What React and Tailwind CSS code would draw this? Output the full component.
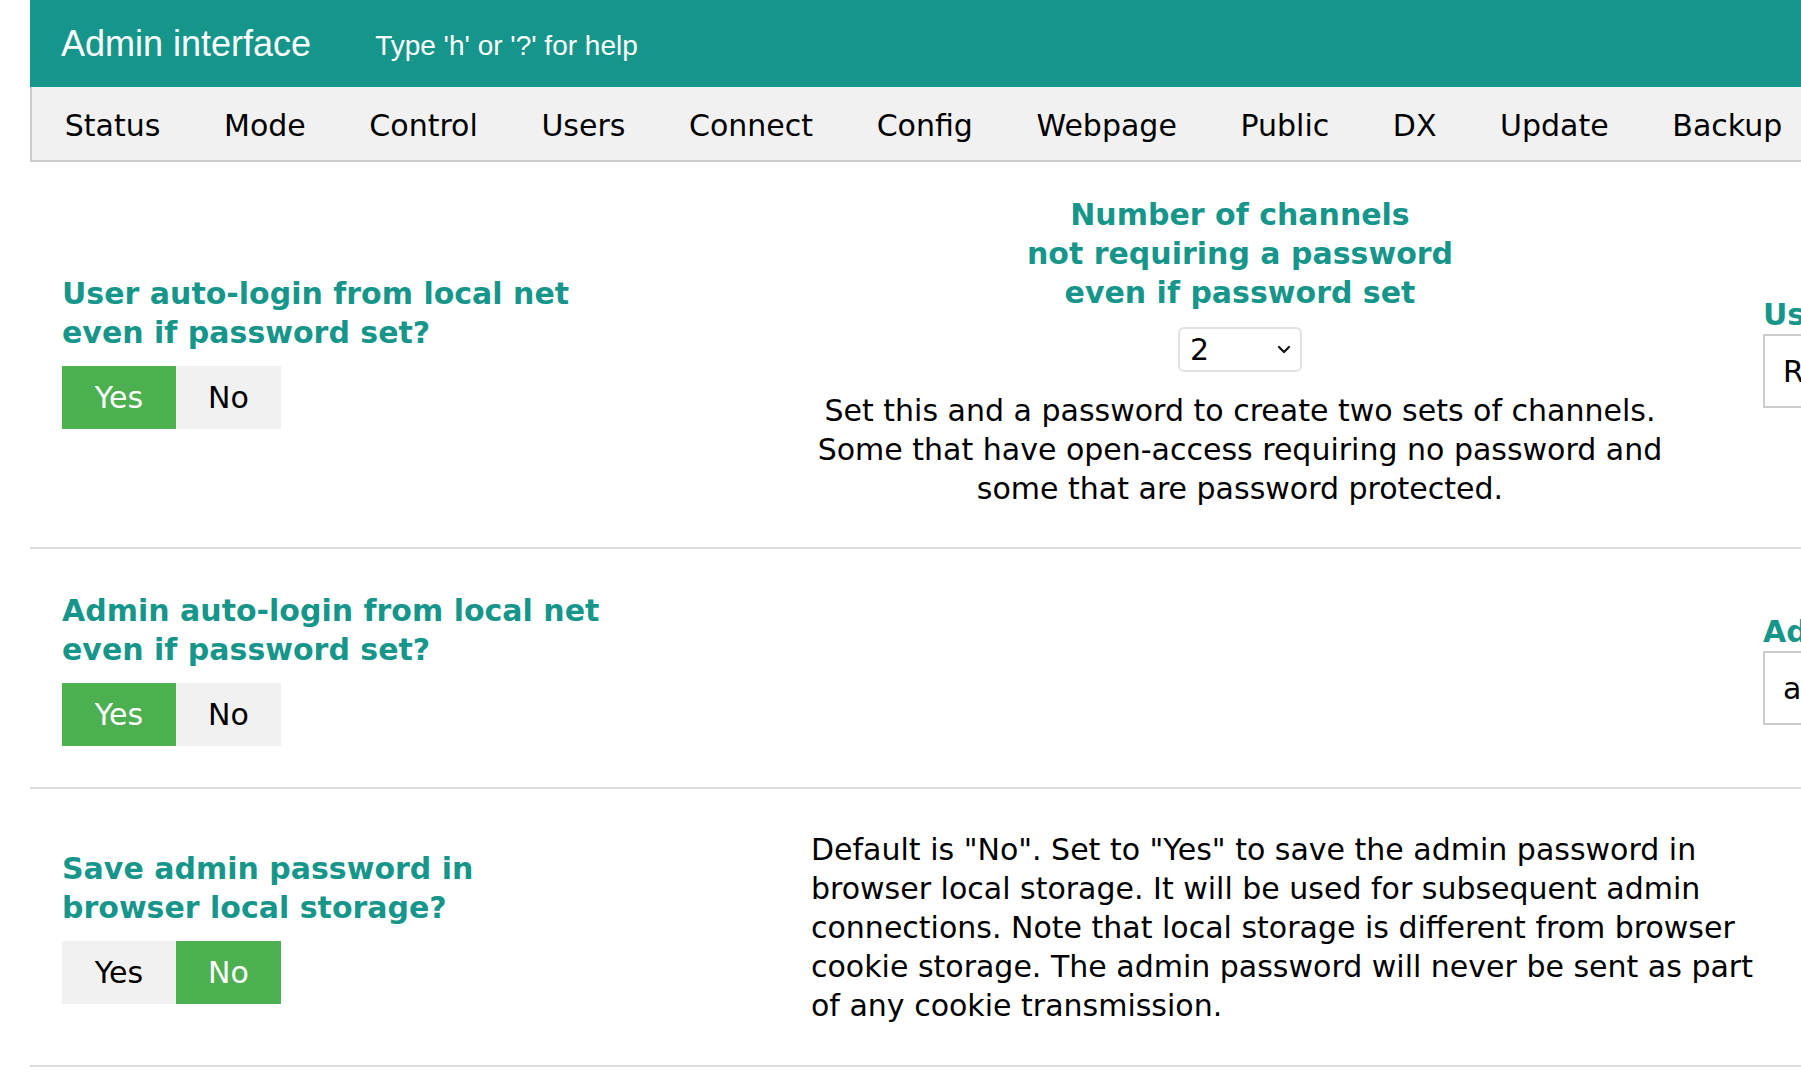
import React from 'react';

const teal = 'text-[#16968a]';

function Toggle({ value }) {
    const on = 'bg-[#4caf50] text-white';
    const off = 'bg-[#f1f1f1] text-black';
    return (
        <div className="flex mt-[14px]">
            <div className={`h-[63px] w-[114px] flex items-center justify-center ${value ? on : off}`}>Yes</div>
            <div className={`h-[63px] w-[105px] flex items-center justify-center ${value ? off : on}`}>No</div>
        </div>
    );
}

function Heading({ children, className = '' }) {
    return <div className={`font-bold leading-[39px] ${teal} ${className}`}>{children}</div>;
}

function FieldBox({ label, value }) {
    return (
        <div className="ml-[94px] shrink-0">
            <Heading className="whitespace-nowrap">{label}</Heading>
            <div className="w-[420px] h-[74px] border-2 border-[#ccc] flex items-center px-[18px]">{value}</div>
        </div>
    );
}

export default function App() {
    const tabs = ['Status', 'Mode', 'Control', 'Users', 'Connect', 'Config', 'Webpage', 'Public', 'DX', 'Update', 'Backup', 'Help'];

    return (
        <div className="w-screen h-screen overflow-hidden bg-white text-black font-['DejaVu_Sans',sans-serif] text-[30px]">
            <div className="ml-[30px] w-[2400px]">
                {/* header */}
                <div className="h-[87px] bg-[#16968a] text-white flex items-center pl-[31px] font-['Liberation_Sans',Arial,sans-serif]">
                    <span className="text-[36px]">Admin interface</span>
                    <span className="ml-[64px] text-[28px] pt-[4px]">Type 'h' or '?' for help</span>
                </div>

                {/* tabs */}
                <div className="h-[75px] bg-[#f1f1f1] border-l-2 border-b-2 border-[#ccc] flex items-center pt-[4px] pl-[1px]">
                    {tabs.map((t) => (
                        <div key={t} className="px-[31.8px] whitespace-nowrap">{t}</div>
                    ))}
                </div>

                {/* row 1 */}
                <div className="flex items-center pt-[33px] pb-[39px] border-b-2 border-[#ddd]">
                    <div className="w-[781px] pl-[32px] shrink-0">
                        <Heading>User auto-login from local net<br />even if password set?</Heading>
                        <Toggle value={true} />
                    </div>
                    <div className="w-[858px] shrink-0 flex flex-col items-center text-center leading-[39px] whitespace-nowrap">
                        <Heading>Number of channels<br />not requiring a password<br />even if password set</Heading>
                        <div className="mt-[15px] w-[124px] h-[45px] border-2 border-[#e2e2e2] rounded-[6px] flex items-center justify-between pl-[10px] pr-[9px]">
                            <span>2</span>
                            <svg width="14" height="9" viewBox="0 0 14 9" fill="none" stroke="#111" strokeWidth="2.2" strokeLinecap="round" strokeLinejoin="round">
                                <path d="M2 2l5 5 5-5" />
                            </svg>
                        </div>
                        <p className="mt-[19px]">
                            Set this and a password to create two sets of channels.<br />
                            Some that have open-access requiring no password and<br />
                            some that are password protected.
                        </p>
                    </div>
                    <FieldBox label="User password" value="R" />
                </div>

                {/* row 2 */}
                <div className="flex items-center pt-[42px] pb-[41px] border-b-2 border-[#ddd]">
                    <div className="w-[781px] pl-[32px] shrink-0">
                        <Heading>Admin auto-login from local net<br />even if password set?</Heading>
                        <Toggle value={true} />
                    </div>
                    <div className="w-[858px] shrink-0" />
                    <FieldBox label="Admin password" value="a" />
                </div>

                {/* row 3 */}
                <div className="flex items-start h-[278px] border-b-2 border-[#ddd]">
                    <div className="w-[781px] pl-[32px] pt-[60px] shrink-0">
                        <Heading>Save admin password in<br />browser local storage?</Heading>
                        <Toggle value={false} />
                    </div>
                    <p className="w-[990px] shrink-0 pt-[41px] leading-[39px] whitespace-nowrap">
                        Default is "No". Set to "Yes" to save the admin password in<br />
                        browser local storage. It will be used for subsequent admin<br />
                        connections. Note that local storage is different from browser<br />
                        cookie storage. The admin password will never be sent as part<br />
                        of any cookie transmission.
                    </p>
                </div>
            </div>
        </div>
    );
}
